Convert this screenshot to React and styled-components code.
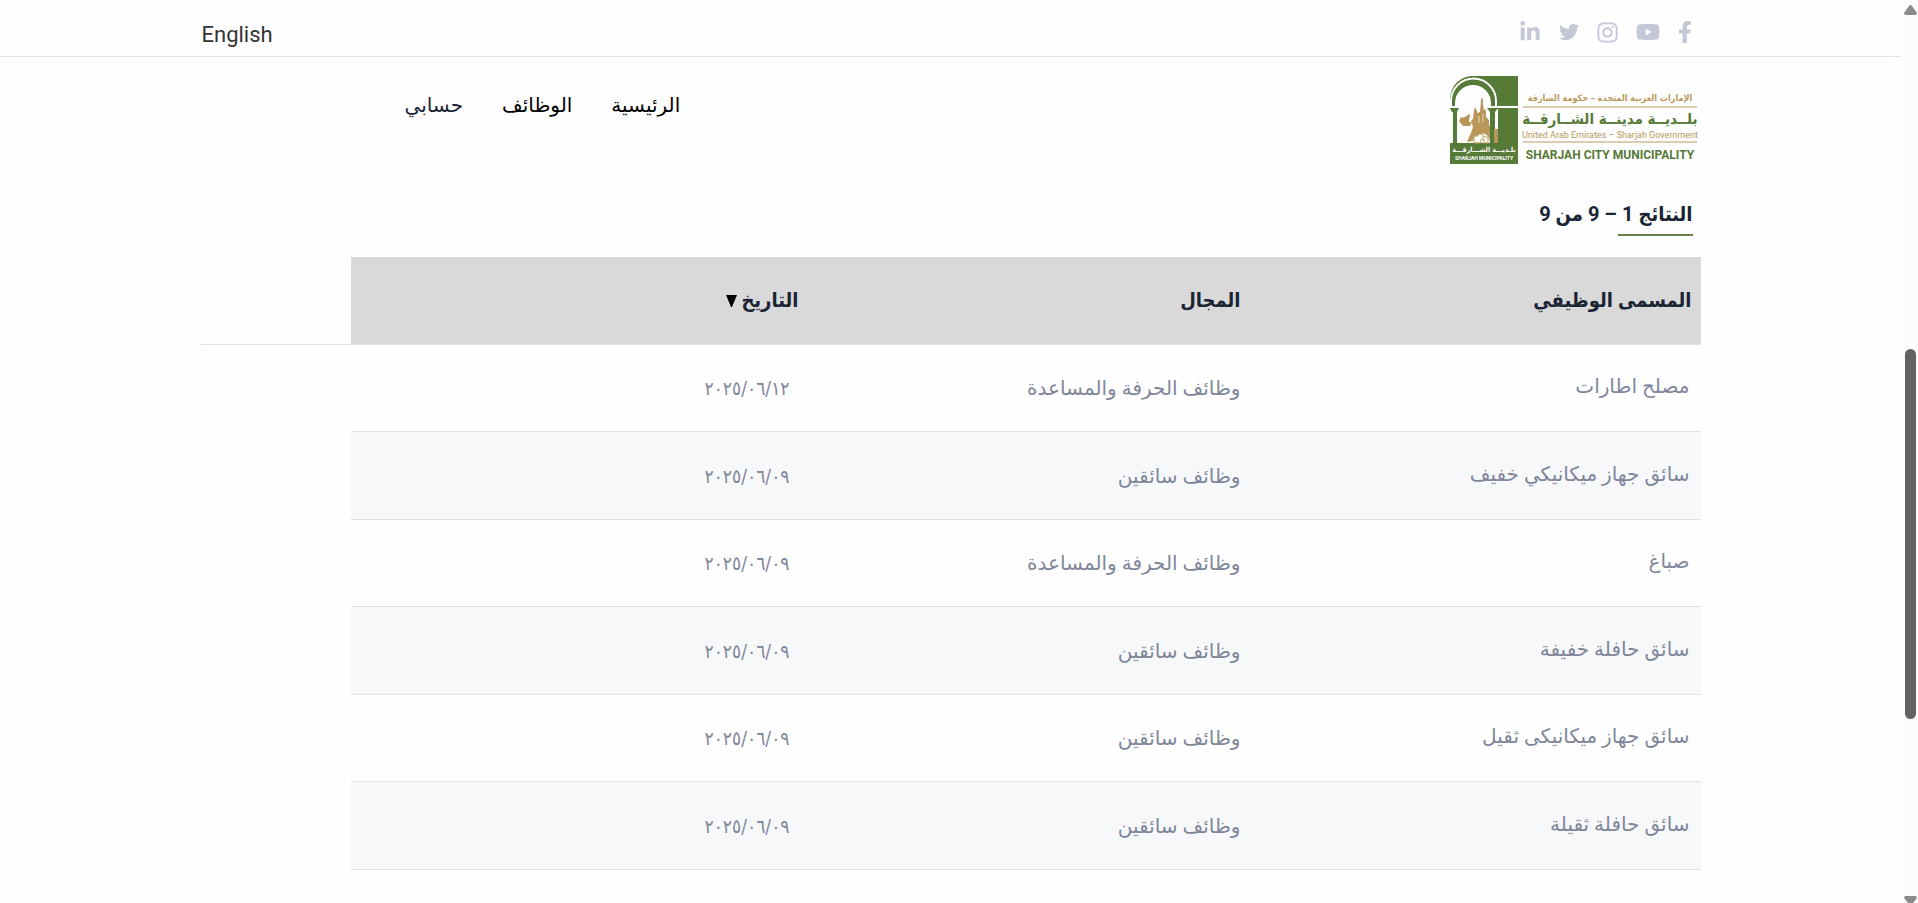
import React from "react";
import styled, { createGlobalStyle } from "styled-components";
import {
  FaFacebookF,
  FaYoutube,
  FaInstagram,
  FaTwitter,
  FaLinkedinIn,
} from "react-icons/fa";

const GlobalStyle = createGlobalStyle`
  * {
    box-sizing: border-box;
  }
  body {
    margin: 0;
    background-color: #fefefe;
    color: #1a2434;
    font-family: Roboto, "DejaVu Sans", sans-serif;
  }
`;

const Screen = styled.div`
  display: flex;
  height: 100vh;
  overflow: hidden;
`;

const Page = styled.div`
  flex: 1;
  min-width: 0;
  overflow: hidden;
`;

const Container = styled.div`
  width: 100%;
  max-width: 1500px;
  margin: 0 auto;
`;

const TopBar = styled.div`
  border-bottom: 1px solid #e1e1ea;
`;

const TopInner = styled(Container)`
  display: flex;
  justify-content: space-between;
  align-items: center;
  height: 56px;
`;

const Social = styled.div`
  display: flex;
  align-items: center;
  gap: 19px;
  padding: 8px 10px 0 0;
`;

const SocialLink = styled.a`
  display: flex;
  justify-content: center;
  width: ${(props) => props.$width || "20px"};
  color: #c3c7d6;

  svg {
    flex-shrink: 0;
  }
`;

const Language = styled.a`
  padding: 14px 0 0 1px;
  color: #333333;
  font-size: 22px;
  line-height: 32px;
  text-decoration: none;
`;

const Header = styled(Container)`
  display: flex;
  justify-content: space-between;
  align-items: flex-start;
  padding: 19px 3px 0 204px;
`;

const Nav = styled.nav`
  display: flex;
  gap: 39px;
  padding-top: 13px;
`;

const NavLink = styled.a`
  color: ${(props) => (props.$muted ? "#1a2434" : "#000000")};
  font-size: 20px;
  line-height: 32px;
  text-decoration: none;
`;

const Results = styled.h1`
  width: fit-content;
  margin: 33px 8px 21px 0;
  font-family: Roboto, "DejaVu Sans Condensed", sans-serif;
  font-size: 20px;
  font-weight: 700;
  line-height: 32px;

  &::after {
    content: "";
    display: block;
    width: 75px;
    height: 2px;
    margin-top: 4px;
    background-color: #658145;
  }
`;

const TableArea = styled(Container)`
  display: flex;
  align-items: flex-start;
`;

const Rule = styled.div`
  flex: 1;
  height: 88px;
  border-bottom: 1px solid #dee2e6;
`;

const Table = styled.table`
  width: 90%;
  table-layout: fixed;
  border-spacing: 0;
  border-bottom: 1px solid #dee2e6;
`;

const HeadCell = styled.th`
  width: ${(props) => props.$width};
  height: 87px;
  padding: 0 9px 2px;
  background-color: #d9d9d9;
  font-family: Roboto, "DejaVu Sans Condensed", sans-serif;
  font-size: 20px;
  font-weight: 700;
  text-align: right;
`;

const Sort = styled.button`
  padding: 0;
  border: 0;
  background: none;
  color: inherit;
  font: inherit;
  cursor: pointer;
`;

const Arrow = styled.svg`
  width: 11px;
  height: 12px;
  margin-right: 4px;
`;

const Row = styled.tr`
  height: 87px;

  &:nth-child(even) {
    height: 88px;
    background-color: #f7f8fa;
  }
`;

const Cell = styled.td`
  padding: 0 9px 0 0;
  border-top: 1px solid #dee2e6;
  color: #80869a;
  font-size: 20px;
`;

const DateCell = styled(Cell)`
  padding-right: 18px;
  font-family: "DejaVu Sans Condensed", sans-serif;
  font-size: 19px;
`;

const JobLink = styled.a`
  display: block;
  padding: 0 2px 4px 0;
  color: inherit;
  text-decoration: none;
`;

const ScrollTrack = styled.div`
  display: flex;
  flex-direction: column;
  align-items: center;
  width: 17px;
  padding: 5px 0 0 2px;
  background-color: #fcfcfc;
`;

const ScrollThumb = styled.div`
  flex-shrink: 0;
  width: 11px;
  height: 41vh;
  margin: 37vh 0 auto;
  border-radius: 6px;
  background-color: #636363;
`;

const jobs = [
  { title: "مصلح اطارات", field: "وظائف الحرفة والمساعدة", date: "٢٠٢٥/٠٦/١٢" },
  { title: "سائق جهاز ميكانيكي خفيف", field: "وظائف سائقين", date: "٢٠٢٥/٠٦/٠٩" },
  { title: "صباغ", field: "وظائف الحرفة والمساعدة", date: "٢٠٢٥/٠٦/٠٩" },
  { title: "سائق حافلة خفيفة", field: "وظائف سائقين", date: "٢٠٢٥/٠٦/٠٩" },
  { title: "سائق جهاز ميكانيكى ثقيل", field: "وظائف سائقين", date: "٢٠٢٥/٠٦/٠٩" },
  { title: "سائق حافلة ثقيلة", field: "وظائف سائقين", date: "٢٠٢٥/٠٦/٠٩" },
];

const Logo = () => (
  <svg width="248" height="89" viewBox="0 0 248 89" role="img" aria-label="بلدية مدينة الشارقة" direction="ltr">
    {/* arch */}
    <path d="M23 0h45v88H0V24C0 10 10 0 23 0z" fill="#567a37" />
    <path d="M1 30V25a22 22 0 0 1 45 0v5" fill="none" stroke="#fff" strokeWidth="2" />
    <path d="M5 30V27a18 18 0 0 1 36 0v3l2 4v33H4V34z" fill="#fefefe" />
    <path d="M0 31h68" stroke="#fff" strokeWidth="2" />
    <path d="M0 33h3v34H0zM6 33h3v34H6zM38 33h2v34h-2zM45 33h3v34h-3z" fill="#fefefe" />
    {/* skyline, dhow and fort */}
    <path d="M11 41c4 2 5-2 9-3l-1 8h3l-2 4h-7l-4-5z" fill="#b9975a" />
    <path d="M21 45l2-2 1-8 1-4 2 4v2l3-1 1-12 1-3 1 3v4l1 7 1-3 1 4v5l3 3v5l3 4h6v14h-7l-3-7-5-3-4 2-5 1-1 5-6 1 2-5 2-4 2-6z" fill="#b9975a" />
    <path d="M24 67v-7h4v-2h5v3h5v6h-4v-4h-3v4z" fill="#fefefe" stroke="#b9975a" />
    <path d="M29 40v7M33 38v8" fill="none" stroke="#e4d7c0" />
    <path d="M3 32h4v35H3zM40 32h4v35h-4zM0 32h9l-2 4H2zM37 32h11l-3 4h-5z" fill="#567a37" />
    <g fill="#fff" textAnchor="middle" fontWeight="700">
      <text x="34" y="76" fontSize="7" fontFamily="DejaVu Sans Condensed" direction="rtl">بلـديـــة الشـــارقـــة</text>
      <text x="34" y="84" fontSize="5" fontFamily="Roboto">SHARJAH MUNICIPALITY</text>
    </g>
    {/* wordmark */}
    <g textAnchor="middle">
      <text x="160" y="25" fontSize="9" fontWeight="700" fill="#b9975a" direction="rtl" fontFamily="DejaVu Sans Condensed">
        الإمارات العربية المتحدة – حكومة الشارقة
      </text>
      <path d="M73 31h174M73 66h174" stroke="#dccbb0" strokeWidth="2" />
      <text x="160" y="48" fontSize="15" fontWeight="700" fill="#567a37" direction="rtl" fontFamily="DejaVu Sans Condensed">
        بلــديــة مدينــة الشــارقــة
      </text>
      <text x="160" y="62" fontSize="9" fill="#b9975a" fontFamily="Roboto">
        United Arab Emirates – Sharjah Government
      </text>
      <text x="160" y="83" fontSize="12" fontWeight="700" fill="#567a37" fontFamily="Roboto">
        SHARJAH CITY MUNICIPALITY
      </text>
    </g>
  </svg>
);

const App = () => {
  return (
    <Screen>
      <GlobalStyle />
      <Page dir="rtl">
        <TopBar>
          <TopInner>
            <Social>
              <SocialLink href="#" aria-label="Facebook" $width="12px"><FaFacebookF size={22} /></SocialLink>
              <SocialLink href="#" aria-label="YouTube" $width="23px"><FaYoutube size={24} /></SocialLink>
              <SocialLink href="#" aria-label="Instagram"><FaInstagram size={23} /></SocialLink>
              <SocialLink href="#" aria-label="Twitter"><FaTwitter size={20} /></SocialLink>
              <SocialLink href="#" aria-label="LinkedIn"><FaLinkedinIn size={22} /></SocialLink>
            </Social>
            <Language href="#">English</Language>
          </TopInner>
        </TopBar>
        <Header>
          <Logo />
          <Nav>
            <NavLink href="#">الرئيسية</NavLink>
            <NavLink href="#">الوظائف</NavLink>
            <NavLink href="#" $muted>حسابي</NavLink>
          </Nav>
        </Header>
        <Container>
          <Results>النتائج 1 – 9 من 9</Results>
        </Container>
        <TableArea>
          <Table>
            <thead>
              <tr>
                <HeadCell scope="col" $width="451px"><Sort>المسمى الوظيفي</Sort></HeadCell>
                <HeadCell scope="col" $width="442px"><Sort>المجال</Sort></HeadCell>
                <HeadCell scope="col">
                  <Sort>
                    التاريخ
                    <Arrow viewBox="0 0 11 12" aria-hidden="true">
                      <path d="M0 0h11L6 12H5z" fill="#000" />
                    </Arrow>
                  </Sort>
                </HeadCell>
              </tr>
            </thead>
            <tbody>
              {jobs.map((job, i) => (
                <Row key={i}>
                  <Cell><JobLink href="#">{job.title}</JobLink></Cell>
                  <Cell>{job.field}</Cell>
                  <DateCell>{job.date}</DateCell>
                </Row>
              ))}
            </tbody>
          </Table>
          <Rule />
        </TableArea>
      </Page>
      <ScrollTrack>
        <svg width="13" height="10" viewBox="0 0 13 10" aria-hidden="true">
          <path d="M5 1q1.500-2 3 0l5 7q0 2-2 2H2q-2 0-2-2z" fill="#8b8b8b" />
        </svg>
        <ScrollThumb />
        <svg width="13" height="7" viewBox="0 0 13 7" aria-hidden="true">
          <path d="M0 2q0-2 2-2h9q2 0 2 2L9 7H4z" fill="#8b8b8b" />
        </svg>
      </ScrollTrack>
    </Screen>
  );
};

export default App;
